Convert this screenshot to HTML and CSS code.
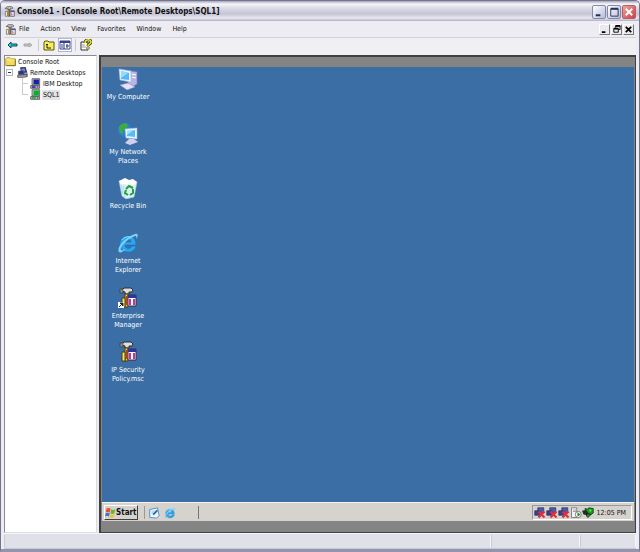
FILE: index.html
```html
<!DOCTYPE html>
<html lang="en">
<head>
  <meta charset="UTF-8">
  <title>Console1 - [Console Root\Remote Desktops\SQL1]</title>
  <meta name="viewport" content="width=device-width, initial-scale=1.0">
  <link rel="stylesheet" href="styles.css">
</head>
<body>

  <svg class="defs" aria-hidden="true">
    <symbol id="i-mmc" viewBox="0 0 16 16">
      <path d="M2 3l3-2h6l2 2-2 1H9v2H6V4H2z" fill="#c8c8c8" stroke="#444"/>
      <path d="M6 5h2v10H6z" fill="#d9b540" stroke="#5a4a18"/>
      <path d="M9 7h6v8H9z" fill="#fff" stroke="#445"/><path d="M9 7h6v2H9z" fill="#4a58a8"/>
      <path d="M11 10v4M13 11v3" stroke="#c04a5a"/><path d="M2 8h3v7H2z" fill="#f5efc8" stroke="#666"/>
    </symbol>
    <symbol id="i-mmc-big" viewBox="0 0 22 22">
      <path d="M4 4l3-3h7l2 2-1 2h-3v2H8V5z" fill="#ddd" stroke="#2c2c2c"/><path d="M3 2h3v4H3z" fill="#888" stroke="#333" stroke-width=".6"/>
      <path d="M8 7h3v13H8z" fill="#efd338" stroke="#4a3d10"/><path d="M5 11h3v9H5z" fill="#ffe45a" stroke="#4a3d10"/>
      <path d="M11 8h8v11h-8z" fill="#fff" stroke="#334"/><path d="M11 8h8v3h-8z" fill="#2c3598"/>
      <path d="M12 12h2v6h-2zM16 12h2v6h-2z" fill="#c9309c"/><path d="M9 9h1v9H9z" fill="#d83020"/>
    </symbol>
    <symbol id="i-folder" viewBox="0 0 16 16">
      <path d="M1 4l2-2h4l2 2h6v10H1z" fill="#f3db59" stroke="#a08c2c"/><path d="M2 6h12" stroke="#fff6ae"/><path d="M2 14h13V5" fill="none" stroke="#5d5320"/>
    </symbol>
    <symbol id="i-screen" viewBox="0 0 16 16">
      <path d="M3 1h11v9H3z" fill="#d5d5d5" stroke="#333"/><path d="M5 2h8v7H5z" fill="currentColor"/>
      <path d="M1 11h13v4H1z" fill="#bbb" stroke="#333"/><path d="M3 13h5" stroke="currentColor" stroke-width="2"/><path d="M10 13h2" stroke="#111"/>
    </symbol>
    <symbol id="i-screens" viewBox="0 0 16 16">
      <path d="M5 1l7-1 2 7-7 2z" fill="#3c4a9c" stroke="#223"/><path d="M6 3l5-1 1 4-5 1z" fill="#7c8cd8"/>
      <path d="M2 6l7-1 1 6H2z" fill="#283593" stroke="#556"/>
      <path d="M10 8l4-1 1 5h-5z" fill="#9aa4d4" stroke="#334"/><path d="M1 12l13-1 1 3-6 1H1z" fill="#aaa" stroke="#333"/>
    </symbol>
    <symbol id="i-ie" viewBox="0 0 22 22">
      <path d="M19 14c-1 4-4 6-8 6-5 0-8-3-8-8s3-8 8-8 8 3 8 9H8c0 4 5 5 7 1zM8 10h6c0-4-6-4-6 0z" fill="#2fa4ea" stroke="#1577c4" stroke-width=".6"/>
      <path d="M5 8c2-3 6-4 9-3" fill="none" stroke="#9ce2ff"/>
      <path d="M2 20C-1 16 8 5 18 2c4-1 3 3 1 5 1-3 0-4-3-2C9 8 2 16 4 18c1 1 3 0 5-1-3 3-6 4-7 3z" fill="#7fd2fb"/>
    </symbol>
    <symbol id="i-netx" viewBox="0 0 16 16">
      <path d="M5 1h8v7H5z" fill="#465fa8" stroke="#30346c"/><path d="M1 5h7v6H1z" fill="#34438c" stroke="#30346c"/>
      <path d="M6 6l8 8M14 6l-8 8" stroke="#e3303c" stroke-width="3"/>
    </symbol>
  </svg>

  <div class="window">
    <header class="titlebar">
      <svg class="icon"><use href="#i-mmc"/></svg>
      <h1>Console1 - [Console Root\Remote Desktops\SQL1]</h1>
      <div class="caption-buttons">
        <button type="button" aria-label="Minimize"><svg viewBox="0 0 13 13"><path d="M3 9h5v2H3z" fill="#26305c"/></svg></button>
        <button type="button" aria-label="Maximize"><svg viewBox="0 0 13 13"><path d="M3 3h8v8H3z" fill="none" stroke="#26305c"/><path d="M3 3h8" stroke="#26305c" stroke-width="2"/></svg></button>
        <button type="button" class="close" aria-label="Close"><svg viewBox="0 0 13 13"><path d="M3 3l7 7M10 3l-7 7" stroke="#fff" stroke-width="2"/></svg></button>
      </div>
    </header>

    <nav class="menubar">
      <svg class="icon"><use href="#i-mmc"/></svg>
      <button type="button">File</button>
      <button type="button">Action</button>
      <button type="button">View</button>
      <button type="button">Favorites</button>
      <button type="button">Window</button>
      <button type="button">Help</button>
      <div class="child-buttons">
        <button type="button" aria-label="Minimize child window"><svg viewBox="0 0 10 10"><path d="M2 7h4v2H2z"/></svg></button>
        <button type="button" aria-label="Restore child window"><svg viewBox="0 0 10 10"><path d="M4 3V1h5v4H7M2 4h5v4H2z" fill="none" stroke="#000"/><path d="M2 4h5M4 1h5" stroke="#000" stroke-width="2"/></svg></button>
        <button type="button" aria-label="Close child window"><svg viewBox="0 0 10 10"><path d="M2 2l6 6M8 2l-6 6" stroke="#000" stroke-width="2"/></svg></button>
      </div>
    </nav>

    <div class="toolbar">
      <button type="button" aria-label="Back"><svg viewBox="0 0 12 12"><path d="M2 6l3-3v2h6v2H5v2z" fill="#19d7d7" stroke="#0a4a58"/></svg></button>
      <button type="button" aria-label="Forward" disabled><svg viewBox="0 0 12 12"><path d="M10 6L7 4v1H2v2h5v1z" fill="#bbb" stroke="#aaa"/></svg></button>
      <span class="sep"></span>
      <button type="button" aria-label="Up one level"><svg viewBox="0 0 12 12"><path d="M1 3l1-1h3l1 1h5v8H1z" fill="#f5ee58" stroke="#5d5814"/><path d="M4 5v4h4M3 6l1-1 1 1" fill="none" stroke="#222"/></svg></button>
      <button type="button" class="pressed" aria-label="Show console tree" aria-pressed="true"><svg viewBox="0 0 12 12"><path d="M1 2h10v8H1z" fill="#fff" stroke="#36408e"/><path d="M1 2h10v2H1z" fill="#36408e"/><path d="M5 4v6M7 7h3M8 5v4" stroke="#26306e"/><path d="M2 6h2M2 8h2" stroke="#36408e"/></svg></button>
      <span class="sep"></span>
      <button type="button" aria-label="Help"><svg viewBox="0 0 12 12"><path d="M1 3h7v8H1z" fill="#fff" stroke="#333"/><path d="M2 6h3M2 8h4" stroke="#999"/><path d="M5 4c0-4 6-4 6-1 0 2-3 2-3 4M8 8v2" fill="none" stroke="#45430a" stroke-width="3"/><path d="M5 4c0-4 6-4 6-1 0 2-3 2-3 4M8 8v2" fill="none" stroke="#e9e930" stroke-width="1.500"/></svg></button>
    </div>

    <main class="content">
      <aside class="tree">
        <ul>
          <li><a href="#root"><svg class="icon"><use href="#i-folder"/></svg><span>Console Root</span></a>
            <ul>
              <li class="parent">
                <button type="button" class="toggle" aria-label="Collapse Remote Desktops"></button>
                <a href="#remote"><svg class="icon"><use href="#i-screens"/></svg><span>Remote Desktops</span></a>
                <ul class="leaves">
                  <li><a href="#ibm"><svg class="icon blue"><use href="#i-screen"/></svg><span>IBM Desktop</span></a></li>
                  <li><a href="#sql1" class="selected"><svg class="icon green"><use href="#i-screen"/></svg><span>SQL1</span></a></li>
                </ul>
              </li>
            </ul>
          </li>
        </ul>
      </aside>

      <section class="remote">
        <div class="desktop">
          <div class="shortcuts">
            <a href="#computer">
              <svg viewBox="0 0 22 22"><path d="M14 3l6 1v12l-5 3-4-2V5z" fill="#b9b5e3" stroke="#8582c2" stroke-width=".6"/><path d="M15 6l4 1M15 9l4 1" stroke="#fff"/><path d="M2 1l12 2v11L3 12z" fill="#e8f4ff" stroke="#a6b9e6" stroke-width=".6"/><path d="M4 3l8 2v7l-8-1z" fill="#56b8f4"/><path d="M4 3l7 2-7 5z" fill="#97dcfd"/><path d="M3 17l8-2 7 4-8 3z" fill="#e2e3f8" stroke="#8d8fc8" stroke-width=".6"/></svg>
              <span>My Computer</span>
            </a>
            <a href="#network">
              <svg viewBox="0 0 22 22"><circle cx="8" cy="7" r="7" fill="#2c7fd6"/><path d="M2 4c3-5 8-4 9-2L9 6l-3 1v4l-3-1z" fill="#3dac3d"/><path d="M8 6l12-1v11l-11-1z" fill="#e6f5ff" stroke="#a5bae7" stroke-width=".6"/><path d="M10 8l8-1v7l-8-1z" fill="#54bbf6"/><path d="M10 8l7-1-7 5z" fill="#9ee1ff"/><path d="M12 16h5l4 3-8 3-5-2z" fill="#cfd0f0"/></svg>
              <span>My Network Places</span>
            </a>
            <a href="#recycle">
              <svg viewBox="0 0 22 22"><path d="M2 4l18 1-3 15-8 2-4-3z" fill="#d9f0f6" stroke="#a3ccdf" stroke-width=".6"/><path d="M2 4l6-3 4 2 4-1 4 3-3 3-13-1z" fill="#fff"/><path d="M4 8l2 9M6 8l2 12" stroke="#b6dcea"/><path d="M9 12l3-3 4 2M16 12v4l-3 2M11 18l-3-2 1-3" fill="none" stroke="#20a33a" stroke-width="2"/></svg>
              <span>Recycle Bin</span>
            </a>
            <a href="#ie">
              <svg><use href="#i-ie"/></svg>
              <span>Internet Explorer</span>
            </a>
            <a href="#enterprise">
              <svg viewBox="0 0 22 22"><use href="#i-mmc-big"/><path d="M1 15h6v6H1z" fill="#fff"/><path d="M2 20l3-3M3 16h3v3z" stroke="#222" fill="#222"/></svg>
              <span>Enterprise Manager</span>
            </a>
            <a href="#ipsec">
              <svg><use href="#i-mmc-big"/></svg>
              <span>IP Security Policy.msc</span>
            </a>
          </div>

          <footer class="taskbar">
            <button type="button" class="start">
              <svg viewBox="0 0 14 14"><path d="M2 2c2-1 3-1 5 0L6 7c-2-1-3-1-5 0z" fill="#e8502b"/><path d="M8 3c2 1 3 1 5 0l-1 5c-2 1-3 1-5 0z" fill="#5fb537"/><path d="M1 8c2-1 3-1 5 0l-1 4c-2-1-3-1-5 0z" fill="#3a6fdc"/><path d="M7 9c2 1 3 1 5 0l-1 4c-2 1-3 1-5 0z" fill="#f5c421"/></svg>
              Start
            </button>
            <div class="quick">
              <button type="button" aria-label="Show Desktop"><svg viewBox="0 0 14 14"><path d="M2 3l9-2 2 9-3 3-8-1z" fill="#eef7ff" stroke="#4386bd"/><path d="M4 4h5v4H4z" fill="#b8dcf5"/><path d="M6 9l5-5" stroke="#2864a8" stroke-width="2"/></svg></button>
              <button type="button" aria-label="Internet Explorer"><svg><use href="#i-ie"/></svg></button>
            </div>
            <div class="tray">
              <svg><use href="#i-netx"/></svg>
              <svg><use href="#i-netx"/></svg>
              <svg><use href="#i-netx"/></svg>
              <svg viewBox="0 0 16 16"><path d="M2 1h7v13H2z" fill="#f4f4f4" stroke="#666"/><path d="M4 4h4M4 6h4" stroke="#888"/><circle cx="11" cy="10" r="4" fill="#fff" stroke="#555"/><path d="M10 7l4 3-4 3z" fill="#109018"/></svg>
              <svg viewBox="0 0 16 16"><path d="M4 2l4 1 1-2 6 1v6l-3 2-7-2z" fill="#159d1f" stroke="#06320a"/><path d="M0 5l5-1 3 3-1 4-5-1z" fill="#2a2a2a"/><path d="M6 9l6 1-4 4-2-2z" fill="#159d1f" stroke="#111"/><path d="M9 3l4 1-2 3z" fill="#5bea52"/></svg>
              <time>12:05 PM</time>
            </div>
          </footer>
        </div>
      </section>
    </main>

    <div class="statusbar"><span></span><span></span><span></span></div>
  </div>

</body>
</html>
```
FILE: styles.css
```css
* { box-sizing: border-box; }
html, body { height: 100%; }
body { margin: 0; font-family: "DejaVu Sans Condensed", Tahoma, "DejaVu Sans", sans-serif; font-size: 7px; color: #111; background: #ece9ee; }
button { font: inherit; color: inherit; background: none; border: 0; margin: 0; padding: 0; }
a { color: inherit; text-decoration: none; }
ul { list-style: none; margin: 0; padding: 0; }
svg { display: block; flex: none; }
.defs { position: absolute; width: 0; height: 0; }
.icon { width: 11px; height: 11px; }

.window { display: flex; flex-direction: column; min-height: 100vh; border: 1px solid #73738c; border-radius: 5px 5px 0 0; border-bottom: 3px solid #9494ae; background: #ececf2; overflow: hidden; }

.titlebar { display: flex; align-items: center; gap: 2px; height: 20px; padding: 1px 3px 0 3px; background: linear-gradient(#a5a5bd 0, #f6f6fa 3px, #dcdce6 7px, #c4c4d6 13px, #e9e9f2 17px, #b0b0c4); }
.titlebar h1 { flex: 1; margin: 0; font-size: 8px; font-weight: bold; line-height: 12px; white-space: nowrap; }
.caption-buttons { display: flex; gap: 1px; }
.caption-buttons button { width: 14px; height: 14px; border: 1px solid #8589ae; border-radius: 2px; background: linear-gradient(135deg, #fff, #b9bcd8); }
.caption-buttons .close { background: linear-gradient(135deg, #f0a49c, #cf3f42); border-color: #b06070; }
.caption-buttons svg { width: 12px; height: 12px; }

.menubar, .toolbar, .content, .statusbar { margin: 0 3px; }
.menubar { display: flex; align-items: center; gap: 11px; height: 17px; padding: 0 2px 0 1px; border-bottom: 1px solid #d2d2dd; background: #ececf2; }
.menubar .icon { margin-right: -8px; }
.child-buttons { display: flex; gap: 1px; margin-left: auto; }
.child-buttons button { width: 11px; height: 11px; border: 1px solid #fff; border-right-color: #777; border-bottom-color: #777; background: #e9e9ee; }
.child-buttons svg { width: 9px; height: 9px; }

.toolbar { display: flex; align-items: center; gap: 2px; height: 17px; padding: 0 1px 3px; background: #f0f0f4; }
.toolbar button { padding: 1px; }
.toolbar svg { width: 12px; height: 12px; }
.toolbar .pressed { border: 1px solid #b5b5cd; background: #fff; padding: 0; }
.toolbar .sep { width: 1px; height: 12px; margin: 0 1px; background: #c9c9d4; }

.content { flex: 1; display: flex; gap: 2px; }
.tree { flex: 0 0 93px; background: #fff; border: 1px solid #8b8b98; border-right-color: #ddd; border-bottom-color: #ddd; }
.tree a { display: flex; align-items: center; gap: 1px; height: 11px; white-space: nowrap; }
.tree a span { padding: 0 1px; line-height: 10px; }
.tree .selected span { background: #e4e4e8; }
.parent { display: grid; grid-template-columns: 12px 1fr; align-items: center; }
.toggle { width: 7px; height: 7px; margin-left: 1px; border: 1px solid #b3b3be; background: linear-gradient(#333, #333) center / 3px 1px no-repeat; }
.leaves { grid-column: 2; margin-left: 5px; padding-left: 8px; background: linear-gradient(#ccc, #ccc) 0 0 / 1px 16px no-repeat; }
.leaves li { margin-left: -8px; padding-left: 8px; background: linear-gradient(#ccc, #ccc) 0 5px / 6px 1px no-repeat; }
.blue { color: #1720ac; }
.green { color: #00b32d; }

.remote { flex: 1; display: flex; min-width: 0; padding: 10px 1px 11px 1px; border: 2px solid #404040; border-right-width: 1px; border-bottom-width: 1px; background: #848484; }
.desktop { flex: 1; display: flex; flex-direction: column; background: #3a6ea5; }
.shortcuts { display: grid; grid-auto-rows: 1fr; align-self: flex-start; width: 52px; min-height: 328px; color: #fff; text-align: center; }
.shortcuts a { display: flex; flex-direction: column; align-items: center; gap: 3px; padding-top: 1px; }
.shortcuts svg { width: 22px; height: 22px; }
.shortcuts span { width: 46px; line-height: 9px; }

.taskbar { display: flex; align-items: center; gap: 6px; height: 19px; margin-top: auto; padding: 1px 2px 0; background: #d6d3ce; border-top: 1px solid #f5f3ee; }
.start { display: flex; align-items: center; height: 15px; padding: 0 1px 0 0; border: 1px solid #fff; border-right-color: #404040; border-bottom-color: #404040; font-size: 8px; font-weight: bold; }
.start svg { width: 11px; height: 11px; }
.quick { display: flex; align-items: center; gap: 4px; width: 55px; height: 13px; padding-left: 3px; border-left: 1px solid #999; border-right: 1px solid #777; }
.quick svg { width: 12px; height: 12px; }
.tray { display: flex; align-items: center; height: 15px; margin-left: auto; padding: 0 5px 0 1px; border: 1px solid #999; border-right-color: #fff; border-bottom-color: #fff; }
.tray svg { width: 12px; height: 12px; }
.tray time { margin-left: 3px; }

.statusbar { display: grid; grid-template-columns: 1fr 89px 56px; height: 16px; padding: 1px 0; background: #e0e0e9; border-top: 1px solid #f5f5fa; border-bottom: 1px solid #c8c8d6; }
.statusbar span { border-right: 1px solid #f5f5fa; border-left: 1px solid #c8c8d6; }
```
